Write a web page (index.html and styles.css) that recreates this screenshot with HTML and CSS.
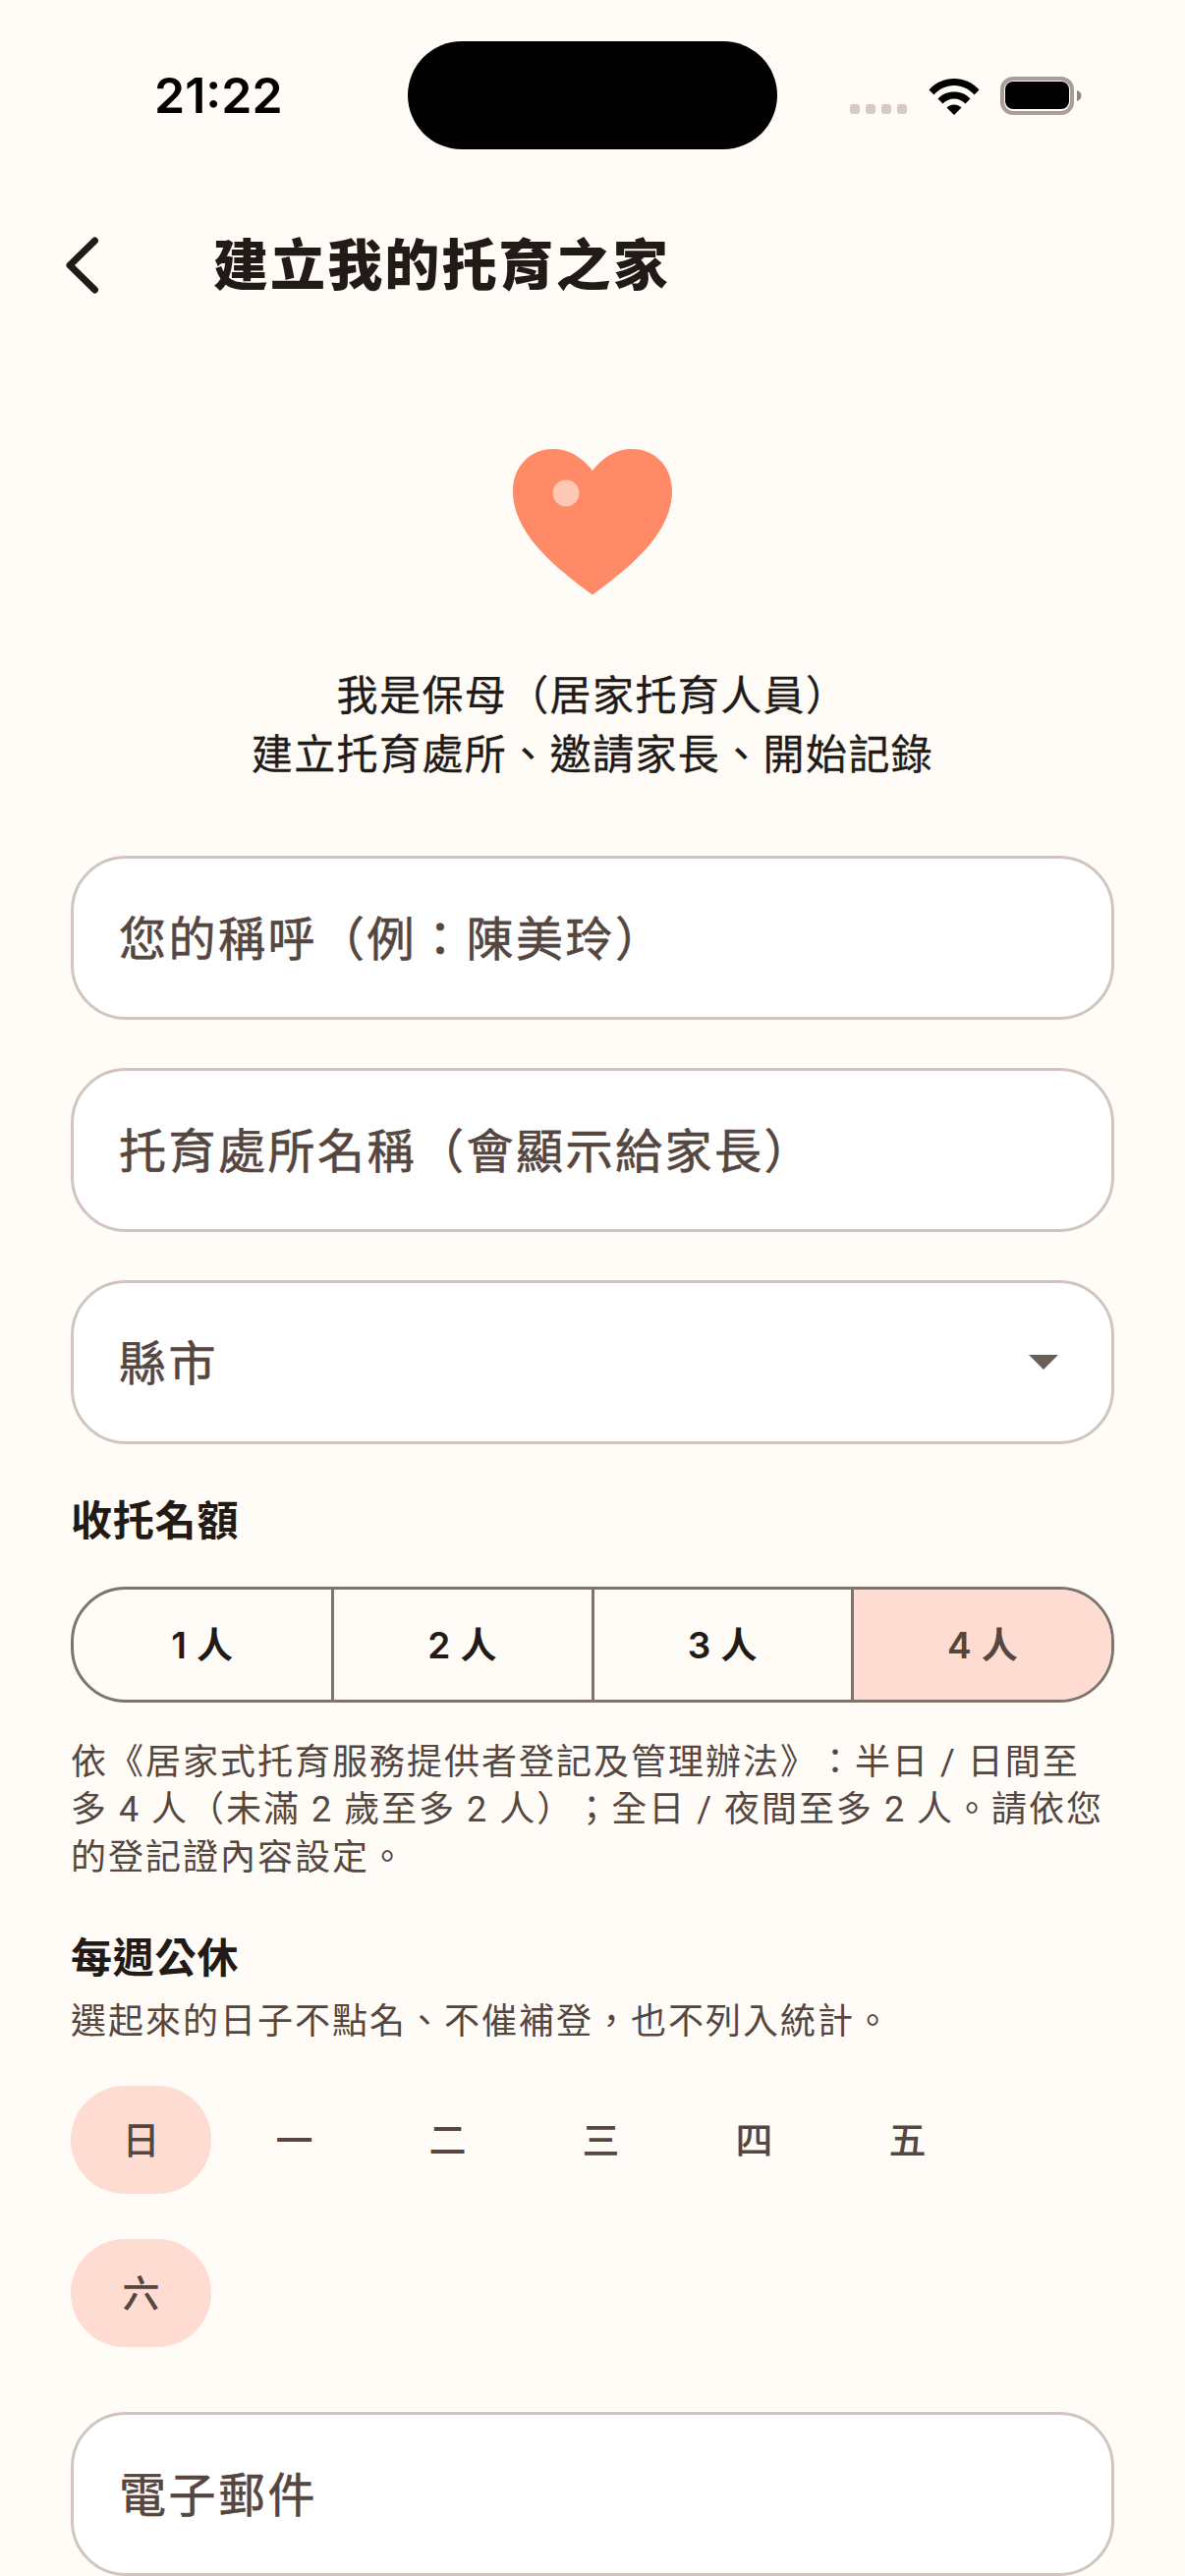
FILE: index.html
```html
<!DOCTYPE html>
<html lang="zh-Hant">
<head>
<meta charset="utf-8">
<title>建立我的托育之家</title>
<link rel="stylesheet" href="styles.css">
</head>
<body>
<div class="screen">
  <div class="status">
    <span class="time">21:22</span>
    <div class="island"></div>
    <div class="status-icons">
      <div class="signal"><i></i><i></i><i></i><i></i></div>
      <svg class="wifi" width="52" height="38" viewBox="0 0 52 38"><path d="M0.5 12.5C7 5 16 1 26 1s19 4 25.500 11.500l-5 5C41 11.500 34 8 26 8S11 11.500 5.500 17.500z M9.500 21.500C13.500 17 19.500 14.500 26 14.500s12.500 2.500 16.500 7l-5 5C34.500 23.500 30.500 21.500 26 21.500s-8.500 2-11.500 5z M18.500 30.500c2-2 4.700-3 7.500-3s5.500 1 7.500 3L26 38z" fill="#000"/></svg>
      <svg class="battery" width="83" height="39" viewBox="0 0 83 39"><rect x="2" y="2" width="71" height="35" rx="11" fill="none" stroke="#a89d9a" stroke-width="4"/><rect x="5" y="5" width="65" height="28" rx="8" fill="#000"/><path d="M78 14c3 1 4.500 3 4.500 5.500s-1.500 4.500-4.500 5.500z" fill="#8f8583"/></svg>
    </div>
  </div>

  <header class="topbar">
    <svg class="back" width="36" height="60" viewBox="0 0 36 60"><path d="M31.500 5 6 30l25.500 25" fill="none" stroke="#221a17" stroke-width="7" stroke-linecap="round" stroke-linejoin="round"/></svg>
    <h1 class="title">建立我的托育之家</h1>
  </header>

  <div class="hero">
    <svg class="heart" width="162" height="149" viewBox="0 0 162 149"><path d="M81 22C70 8 57 0 41 0 17 0 0 18 0 43c0 42 41 76 81 105.500 40-29.500 81-63.500 81-105.500C162 18 145 0 121 0 105 0 92 8 81 22z" fill="#ff8a68"/><circle cx="54" cy="45" r="13.500" fill="#ffc9b6"/></svg>
    <p class="intro">我是保母（居家托育人員）<br>建立托育處所、邀請家長、開始記錄</p>
  </div>

  <form class="form">
    <div class="field">您的稱呼（例：陳美玲）</div>
    <div class="field">托育處所名稱（會顯示給家長）</div>
    <div class="field select">縣市<span class="caret"></span></div>

    <h2 class="label label-cap">收托名額</h2>
    <div class="segments">
      <div class="seg">1 人</div>
      <div class="seg">2 人</div>
      <div class="seg">3 人</div>
      <div class="seg on">4 人</div>
    </div>
    <p class="note">依《居家式托育服務提供者登記及管理辦法》：半日 / 日間至多 4 人（未滿 2 歲至多 2 人）；全日 / 夜間至多 2 人。請依您的登記證內容設定。</p>

    <h2 class="label label-off">每週公休</h2>
    <p class="hint">選起來的日子不點名、不催補登，也不列入統計。</p>
    <div class="days">
      <div class="day on">日</div>
      <div class="day">一</div>
      <div class="day">二</div>
      <div class="day">三</div>
      <div class="day">四</div>
      <div class="day">五</div>
      <div class="day on">六</div>
    </div>

    <div class="field email">電子郵件</div>
  </form>
</div>
</body>
</html>
```

FILE: styles.css
```css
* { box-sizing: border-box; }
html, body { margin: 0; padding: 0; }
body {
  background: #fffcf8;
  font-family: Inter, "Noto Sans CJK TC", sans-serif;
  color: #221a17;
  text-spacing-trim: space-all;
}
.screen { width: 1206px; height: 2622px; overflow: hidden; }

.status { position: relative; height: 231px; display: flex; }
.time {
  margin: 67px 0 0 157px;
  font-size: 50px;
  line-height: 60px;
  font-weight: 600;
  color: #000;
}
.island {
  position: absolute;
  left: 415px; top: 42px;
  width: 376px; height: 110px;
  border-radius: 56px;
  background: #000;
}
.status-icons {
  position: absolute;
  left: 865px; top: 78px;
  display: flex;
  align-items: flex-end;
}
.signal { display: flex; gap: 6px; margin-bottom: 1px; }
.signal i { width: 10px; height: 10px; border-radius: 3px; background: #d6c8c4; }
.wifi { margin-left: 22px; }
.battery { margin-left: 21px; }

.topbar {
  display: flex;
  align-items: center;
  height: 78px;
  padding-left: 65px;
}
.title {
  margin: 0 0 0 116px;
  font-size: 56px;
  line-height: 78px;
  font-weight: 900;
  letter-spacing: 2.1px;
}

.hero { display: flex; flex-direction: column; align-items: center; padding-top: 148px; }
.intro {
  margin: 72px 0 0;
  font-size: 42px;
  line-height: 60px;
  letter-spacing: 1.4px;
  text-align: center;
  font-weight: 400;
  -webkit-text-stroke: 0.3px #221a17;
}

.form { padding: 73px 72px 0; }
.field {
  display: flex;
  align-items: center;
  height: 167px;
  margin-bottom: 49px;
  padding: 0 46px 5px;
  background: #fff;
  border: 3px solid #d4c4bf;
  border-radius: 56px;
  font-size: 48px;
  font-weight: 400;
  -webkit-text-stroke: 0.6px #55463f;
  letter-spacing: 2.5px;
  color: #55463f;
}
.select { justify-content: space-between; margin-bottom: 0; }
.caret {
  width: 0; height: 0;
  margin: 5px 8px 0 0;
  border-left: 15px solid transparent;
  border-right: 15px solid transparent;
  border-top: 15px solid #6b5e59;
}
.label { margin: 0; font-size: 42px; line-height: 60px; font-weight: 700; letter-spacing: 0.8px; }
.label-cap { margin-top: 48px; }
.segments {
  display: flex;
  height: 118px;
  margin-top: 37px;
  border: 3px solid #7f7370;
  border-radius: 56px;
  overflow: hidden;
}
.seg {
  flex: 1;
  display: flex;
  align-items: center;
  justify-content: center;
  padding-bottom: 4px;
  font-size: 37px;
  font-weight: 600;
  letter-spacing: 0.5px;
  border-left: 3px solid #7f7370;
}
.seg:first-child { border-left: 0; }
.seg.on { background: #ffdcd2; color: #55463f; }
.note {
  margin: 37px 0 0;
  font-family: Roboto, "Noto Sans CJK TC", sans-serif;
  font-size: 36px;
  line-height: 48.400px;
  letter-spacing: 2px;
  color: #55463f;
}
.label-off { margin-top: 48px; }
.hint {
  margin: 9px 0 0;
  font-size: 36px;
  line-height: 50px;
  letter-spacing: 2px;
  color: #55463f;
}
.days {
  display: flex;
  flex-wrap: wrap;
  gap: 46px 13px;
  margin-top: 41px;
}
.day {
  width: 143px;
  height: 110px;
  display: flex;
  align-items: center;
  justify-content: center;
  padding-bottom: 5px;
  border-radius: 55px;
  font-size: 38px;
  font-weight: 500;
  color: #55463f;
}
.day.on { background: #ffdcd2; }
.email { margin-top: 66px; }
```
